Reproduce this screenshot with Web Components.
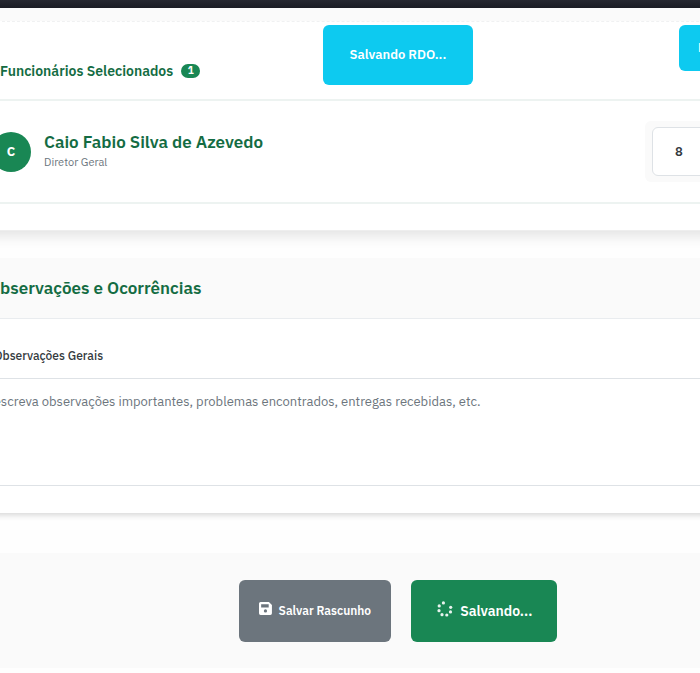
<!DOCTYPE html>
<html lang="pt-BR">
<head>
<meta charset="utf-8">
<title>RDO</title>
<style>
html { background: #fefefe; }
body { margin: 0; font-family: "IBM Plex Sans", "Open Sans", "Noto Sans", sans-serif; color: #343a40; overflow: hidden; }
</style>
</head>
<body>
<rdo-page></rdo-page>
<script>
function define(name, html) {
  const template = document.createElement('template');
  template.innerHTML = html;
  customElements.define(name, class extends HTMLElement {
    constructor() {
      super();
      this.attachShadow({ mode: 'open' }).append(template.content.cloneNode(true));
    }
  });
}

define('rdo-topbar', `
<style>
:host { display: block; height: 8px; background: linear-gradient(#262831, #1a1c24); }
</style>`);

define('rdo-toast', `
<style>
:host { display: flex; align-items: center; box-sizing: border-box; background: #0dcaf0; color: #fff; border-radius: 6px; font-size: 13px; font-weight: 600; line-height: 20px; white-space: nowrap; }
</style>
<slot></slot>`);

define('rdo-badge', `
<style>
:host { display: inline-flex; align-items: center; justify-content: center; min-width: 19px; height: 14px; border-radius: 7px; background: #198754; color: #fff; font-size: 10px; font-weight: 700; line-height: 14px; }
</style>
<slot></slot>`);

define('rdo-employee', `
<style>
:host { display: flex; align-items: center; height: 101px; padding: 0 39px; border-bottom: 2px solid #edf3f1; }
.avatar { display: flex; align-items: center; justify-content: center; width: 40px; height: 40px; border-radius: 50%; background: #198754; color: #fff; font-size: 13px; font-weight: 700; }
.who { flex: 1; padding-left: 13px; }
.name { font-size: 17px; line-height: 22px; font-weight: 600; color: #146c43; }
.role { font-size: 11px; line-height: 19px; color: #6c757d; }
.hours { box-sizing: border-box; width: 160px; padding: 6px 7px; background: #fafafa; border-radius: 6px; }
input { display: block; box-sizing: border-box; width: 100%; height: 49px; margin: 0; padding: 0 22px; border: 1px solid #dee2e6; border-radius: 6px; background: #fff; color: #343a40; font: 600 13px/20px "IBM Plex Sans", "Open Sans", "Noto Sans", sans-serif; }
</style>
<div class="avatar"><slot name="initial"></slot></div>
<div class="who">
  <div class="name"><slot name="name"></slot></div>
  <div class="role"><slot name="role"></slot></div>
</div>
<div class="hours"><input type="number" value="8" aria-label="Horas"></div>`);

define('rdo-team-card', `
<style>
:host { display: block; margin-top: 13px; padding-bottom: 26px; background: #fff; border-top: 1px dashed #f0f1f2; border-bottom: 1px solid #eee; box-shadow: 0 10px 14px -6px rgba(0,0,0,.12); }
header { display: flex; align-items: center; gap: 8px; padding: 39px 48px 18px; border-bottom: 2px solid #edf3f1; }
h3 { margin: 0; font-size: 14px; line-height: 20px; font-weight: 600; color: #146c43; }
</style>
<header><h3><slot name="title"></slot></h3><slot name="count"></slot></header>
<slot></slot>`);

define('rdo-notes-card', `
<style>
:host { display: block; background: #fff; padding-bottom: 27px; box-shadow: 0 5px 6px -3px rgba(0,0,0,.16); }
h2 { margin: 0; padding: 18px 36px; background: #fafafa; border-bottom: 1px solid #e9ecef; font-size: 17px; line-height: 24px; font-weight: 600; color: #146c43; }
label { display: block; padding: 27px 42px 12px; font-size: 12px; line-height: 20px; font-weight: 500; }
.field { padding: 0 16px; }
textarea { display: block; box-sizing: border-box; width: 100%; height: 108px; margin: 0; padding: 13px 16px; border: 1px solid #dee2e6; border-radius: 6px; resize: none; background: #fff; color: #343a40; font: 400 13px/20px "IBM Plex Sans", "Open Sans", "Noto Sans", sans-serif; }
textarea::placeholder { color: #6c757d; opacity: 1; }
</style>
<h2><slot></slot></h2>
<label for="notes">Observações Gerais</label>
<div class="field"><textarea id="notes" placeholder="Descreva observações importantes, problemas encontrados, entregas recebidas, etc."></textarea></div>`);

define('rdo-button', `
<style>
:host { display: block; }
button { display: flex; align-items: center; justify-content: center; box-sizing: border-box; height: 62px; margin: 0; padding: 0 20px; border: 0; border-radius: 6px; background: #6c757d; color: #fff; font: 600 12px/20px "IBM Plex Sans", "Open Sans", "Noto Sans", sans-serif; gap: 6px; white-space: nowrap; }
:host([primary]) button { padding: 0 25px; background: #198754; font-size: 14px; }
</style>
<button type="button"><slot name="icon"></slot><span><slot></slot></span></button>`);

define('icon-save', `
<style>:host, svg { display: block; } :host { padding-bottom: 4px; }</style>
<svg width="14" height="14" viewBox="1 1 13 13" aria-hidden="true"><path fill="#fff" fill-rule="evenodd" d="M2.5 1H10.2L13 3.8V11.5Q13 13 11.5 13H2.5Q1 13 1 11.5V2.5Q1 1 2.5 1ZM3 3V6H10V3ZM7 7.8A1.5 1.5 0 1 0 7 10.8A1.5 1.5 0 1 0 7 7.8Z"/></svg>`);

define('icon-spinner', `
<style>:host, svg { display: block; } :host { padding-bottom: 4px; }</style>
<svg width="18" height="18" viewBox="0 0 18 18" fill="#fff" fill-opacity=".9" aria-hidden="true"><circle cx="7.4" cy="2.9" r="1.6"/><circle cx="3.2" cy="5.9" r="1.6"/><circle cx="3" cy="10.7" r="1.6"/><circle cx="6" cy="14.7" r="1.6"/><circle cx="10.8" cy="15" r="1.6"/><circle cx="14.5" cy="11.9" r="1.6"/><circle cx="14.7" cy="7.3" r="1.6"/></svg>`);

define('rdo-actions', `
<style>
:host { display: flex; justify-content: center; gap: 20px; padding: 27px 39px 26px; background: #fafafa; }
</style>
<slot></slot>`);

define('rdo-page', `
<style>
:host { display: block; position: relative; overflow: hidden; }
.shell { margin: 0 -144px 0 -48px; }
.top { background: linear-gradient(#fafafa 50%, transparent 50%); display: flow-root; }
rdo-notes-card { margin-top: 27px; }
rdo-actions { margin: 40px 0 6px; }
.toasts { position: absolute; top: 25px; left: -48px; right: -144px; display: grid; justify-items: center; }
.toasts rdo-toast { height: 60px; padding: 0 27px; }
.side { position: absolute; top: 25px; left: 679px; height: 46px; padding: 0 19px; }
</style>
<rdo-topbar></rdo-topbar>
<main class="shell">
  <div class="top">
  <rdo-team-card>
    <span slot="title">Funcionários Selecionados</span>
    <rdo-badge slot="count">1</rdo-badge>
    <rdo-employee><span slot="initial">C</span><span slot="name">Caio Fabio Silva de Azevedo</span><span slot="role">Diretor Geral</span></rdo-employee>
  </rdo-team-card>
  </div>
  <rdo-notes-card>Observações e Ocorrências</rdo-notes-card>
  <rdo-actions>
    <rdo-button><icon-save slot="icon"></icon-save>Salvar Rascunho</rdo-button>
    <rdo-button primary><icon-spinner slot="icon"></icon-spinner>Salvando...</rdo-button>
  </rdo-actions>
</main>
<div class="toasts" role="status"><rdo-toast>Salvando RDO...</rdo-toast></div>
<rdo-toast class="side">Processando</rdo-toast>`);
</script>
</body>
</html>
